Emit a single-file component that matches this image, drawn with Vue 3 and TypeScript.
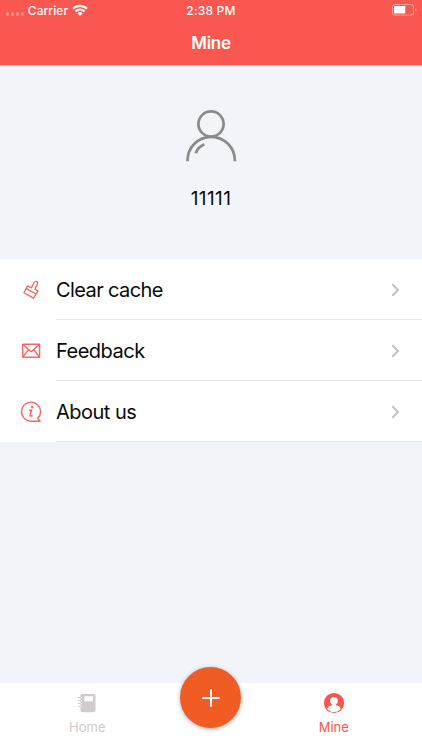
<script setup lang="ts">
interface MenuItem {
  id: 'clear' | 'feedback' | 'about'
  label: string
}

const userName = '11111'
const items: MenuItem[] = [
  { id: 'clear', label: 'Clear cache' },
  { id: 'feedback', label: 'Feedback' },
  { id: 'about', label: 'About us' },
]
</script>

<template>
  <div class="screen">
    <header class="header">
      <div class="status">
        <div class="status-left">
          <span class="signal"><i v-for="n in 4" :key="n"></i></span>
          <span class="carrier">Carrier</span>
          <svg class="wifi" width="16" height="12" viewBox="0 0 16 12">
            <g fill="none" stroke="#fff" stroke-width="2.1">
              <path d="M1 4.7a10 10 0 0 1 14 0" />
              <path d="M3.500 7.400a6.400 6.400 0 0 1 9 0" />
            </g>
            <path d="M5.400 9.300a3.700 3.700 0 0 1 5.200 0L8 12z" fill="#fff" />
          </svg>
        </div>
        <span class="time">2:38 PM</span>
        <div class="status-right">
          <svg width="26" height="12" viewBox="0 0 26 12">
            <rect x="0.5" y="0.5" width="21" height="10.6" rx="2.6" fill="none" stroke="#fff" stroke-opacity="0.45" />
            <rect x="2" y="2" width="11.3" height="7.6" rx="1" fill="#fff" />
            <path d="M23 4v3.8c1-.3 1.5-1 1.5-1.9S24 4.300 23 4z" fill="#fff" fill-opacity="0.5" />
          </svg>
        </div>
      </div>
      <h1 class="title">Mine</h1>
    </header>

    <section class="profile">
      <svg class="avatar" width="52" height="52" viewBox="0 0 52 52" fill="none" stroke="#8a8a8a" stroke-width="2.7">
        <circle cx="26" cy="14" r="12.6" />
        <path d="M2.500 51.200V50.500a23.700 23.700 0 0 1 47.400 0V51.200" />
        <path d="M10.700 43.200a16 16 0 0 1 8.700-9" />
      </svg>
      <div class="name">{{ userName }}</div>
    </section>

    <ul class="menu">
      <li v-for="item in items" :key="item.id" class="row">
        <span class="icon">
          <svg v-if="item.id === 'clear'" width="22" height="22" viewBox="0 0 22 22" fill="none" stroke="#f4685e" stroke-width="1.3" stroke-linejoin="round">
            <path d="M7.600 6.900 11.300 8.900 14 3.700Q15.300 1.800 16.800 2.600Q18.300 3.600 17.300 5.400L14.900 10 18 11.900 13.500 19.100 3.900 13.700Z" />
            <path d="M6 9.400 16.100 15" />
          </svg>
          <svg v-else-if="item.id === 'feedback'" width="22" height="22" viewBox="0 0 22 22" fill="none" stroke="#f4685e" stroke-width="1.4" stroke-linejoin="round">
            <rect x="2.700" y="4.200" width="16.900" height="13.100" rx="0.5" />
            <path d="M3 4.600 11.100 11.800 19.300 4.600M3 16.900 8.500 9.700M19.300 16.900 13.700 9.700" />
          </svg>
          <svg v-else width="22" height="22" viewBox="0 0 22 22" fill="none" stroke="#f4685e" stroke-width="1.4" stroke-linecap="round" stroke-linejoin="round">
            <path d="M17.700 17.500A9.500 9.500 0 1 0 11 20.200H20.200Z" />
            <path d="M9.600 9.500 11.500 9 10.100 14.200Q9.900 15.500 12 14.700" stroke-width="1.600" />
            <circle cx="12.200" cy="6.200" r="1.200" fill="#f4685e" stroke="none" />
          </svg>
        </span>
        <div class="row-body">
          <span class="label" :class="item.id">{{ item.label }}</span>
          <svg class="chevron" width="9" height="14" viewBox="0 0 9 14" fill="none" stroke="#c3c3c5" stroke-width="2">
            <path d="M1.300 1.300 7 7 1.300 12.700" />
          </svg>
        </div>
      </li>
    </ul>

    <nav class="tabs">
      <a class="tab home">
        <svg width="22" height="22" viewBox="0 0 22 22">
          <rect x="4.500" y="2" width="15" height="18.300" rx="1.700" fill="#d0cccd" />
          <rect x="8.300" y="4.300" width="8.700" height="5" fill="#fff" />
          <g fill="none" stroke="#fff" stroke-width="1"><path d="M4 5.600h2M4 8.600h2M4 11.600h2M4 14.600h2" /></g>
          <g fill="none" stroke="#d0cccd" stroke-width="1"><path d="M2 5.600h3M2 8.600h3M2 11.600h3M2 14.600h3" /></g>
        </svg>
        <span>Home</span>
      </a>
      <div class="tab-center">
        <button class="fab" aria-label="Add">
          <svg width="18" height="18" viewBox="0 0 18 18" stroke="#fff" stroke-width="2"><path d="M9 0.300V17.700M0.300 9H17.700" /></svg>
        </button>
      </div>
      <a class="tab mine">
        <svg width="22" height="22" viewBox="0 0 22 22">
          <circle cx="11" cy="11" r="10.100" fill="#f9564f" />
          <circle cx="11" cy="8.800" r="3.900" fill="#fff" />
          <path d="M9 11.500h4v1.700c3 .5 4.400 1.800 4.800 3.700A9 9 0 0 1 4.200 16.900c.4-1.900 1.800-3.200 4.800-3.700z" fill="#fff" />
        </svg>
        <span>Mine</span>
      </a>
    </nav>
  </div>
</template>

<style>
body {
  margin: 0;
}
</style>

<style scoped>
.screen {
  width: 422px;
  height: 750px;
  display: flex;
  flex-direction: column;
  overflow: hidden;
  background: #f1f5fa;
  color: #0a0a0a;
  font-family: Inter, "Liberation Sans", sans-serif;
}
.header {
  height: 65px;
  flex: none;
  background: #f9574f;
  color: #fff;
  border-bottom: 1px solid #f8c9cc;
}
.status {
  display: grid;
  grid-template-columns: 1fr auto 1fr;
  align-items: center;
  height: 21px;
  font-size: 12px;
  line-height: 21px;
}
.status-left {
  display: flex;
  align-items: center;
  padding-left: 6px;
}
.signal {
  display: flex;
  gap: 1.7px;
  padding-top: 7px;
  margin-right: 4px;
}
.signal i {
  width: 3.2px;
  height: 3.2px;
  border-radius: 50%;
  background: rgba(255, 255, 255, 0.32);
}
.carrier {
  font-weight: 500;
  letter-spacing: 0.05px;
}
.wifi {
  margin-left: 4px;
  margin-bottom: 1px;
}
.time {
  font-weight: 500;
  letter-spacing: 0.2px;
}
.status-right {
  display: flex;
  justify-content: flex-end;
  padding-right: 4px;
  padding-bottom: 1px;
}
.title {
  margin: 0;
  height: 44px;
  line-height: 44px;
  text-align: center;
  font-size: 17px;
  font-weight: 600;
  letter-spacing: -0.25px;
}
.profile {
  height: 193px;
  flex: none;
  display: flex;
  flex-direction: column;
  align-items: center;
}
.avatar {
  margin-top: 44px;
}
.name {
  margin-top: 25px;
  line-height: 24px;
  font-size: 19px;
  letter-spacing: 0.4px;
}
.menu {
  margin: 0;
  padding: 0;
  list-style: none;
}
.row {
  display: flex;
  height: 61px;
  background: #fff;
}
.icon {
  width: 56px;
  display: flex;
  align-items: center;
  padding-left: 20px;
  box-sizing: border-box;
}
.row-body {
  flex: 1;
  display: flex;
  align-items: center;
  justify-content: space-between;
  padding-top: 1px;
  padding-right: 22px;
  border-bottom: 1px solid #e6e6e9;
}
.label {
  font-size: 20px;
  line-height: 26px;
  letter-spacing: -0.5px;
}
.clear {
  letter-spacing: -0.6px;
}
.tabs {
  margin-top: auto;
  height: 67px;
  display: grid;
  grid-template-columns: 174.500px 72px 174.500px;
  background: #fff;
}
.tab {
  display: flex;
  flex-direction: column;
  align-items: center;
  padding-top: 9px;
  font-size: 13px;
  line-height: 16px;
}
.tab span {
  margin-top: 5px;
}
.home {
  color: #cfcbcc;
}
.mine {
  color: #f9564f;
}
.tab-center {
  display: flex;
  justify-content: center;
  align-items: flex-start;
}
.fab {
  width: 61px;
  height: 61px;
  flex: none;
  margin-top: -16px;
  padding: 0;
  border: 0;
  border-radius: 50%;
  display: flex;
  align-items: center;
  justify-content: center;
  background: #f15c25;
  box-shadow: 0 1px 4px rgba(0, 0, 0, 0.32);
}
</style>
